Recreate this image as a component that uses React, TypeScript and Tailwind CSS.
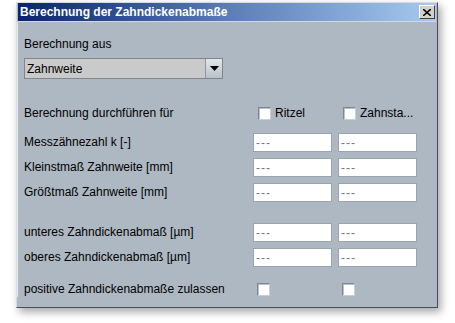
import React from 'react';

const font = { fontFamily: '"Liberation Sans", Arial, sans-serif' };

const Field = () => (
  <div className="w-[79px] h-[19px] bg-white border border-[#9ba4ad] flex items-center pl-[2px] text-[12px] text-[#767676] leading-none tracking-[1px]">
    ---
  </div>
);

const Check = () => (
  <div className="w-[13px] h-[13px] bg-white border border-t-[#7f8891] border-l-[#7f8891] border-r-[#c9ced3] border-b-[#c9ced3] shadow-[inset_1px_1px_0_#b9c0c7]" />
);

const FieldRow = ({ label, className = '' }: { label: string; className?: string }) => (
  <div className={`flex items-center h-[19px] ${className}`}>
    <span className="w-[229px] text-[12px] leading-[15px] text-black">{label}</span>
    <div className="flex gap-[6px]">
      <Field />
      <Field />
    </div>
  </div>
);

export default function App() {
  return (
    <div className="w-[455px] h-[323px] bg-white pt-[2px] pl-[16px]" style={font}>
      <div className="w-[422px] h-[306px] flex flex-col bg-[#aeb8c2] border border-t-[#d8dce0] border-l-[#d8dce0] border-r-[#4a4d52] border-b-[#4a4d52] shadow-[3px_4px_8px_rgba(0,0,0,0.35)]">
        <div className="h-[19px] mx-[1px] flex items-center justify-between bg-gradient-to-r from-[#0a246a] via-[#5a7db5] to-[#a6caf0] border-b border-[#d4d8dc]">
          <span className="pl-[2px] text-white font-bold text-[12px] leading-none">
            Berechnung der Zahndickenabmaße
          </span>
          <div className="w-[16px] h-[14px] mr-[1px] bg-[#d4d0c8] border border-t-white border-l-white border-r-[#404040] border-b-[#404040] flex items-center justify-center">
            <svg width="8" height="7" viewBox="0 0 8 7">
              <path d="M0 0L8 7M8 0L0 7" stroke="#000" strokeWidth="1.6" />
            </svg>
          </div>
        </div>

        <div className="flex flex-col pl-[6px] border-l border-[#e6e9ec]">
          <span className="mt-[15px] text-[12px] leading-[15px] text-black">Berechnung aus</span>

          <div className="mt-[6px] w-[199px] h-[21px] flex border border-[#7d8791] bg-[#cacaca]">
            <span className="flex-1 flex items-center pl-[2px] text-[12px] leading-none text-black">Zahnweite</span>
            <div className="w-[17px] h-full border-l border-[#8d97a1] bg-gradient-to-b from-[#e4e7ea] to-[#b9c1c9] flex items-center justify-center">
              <svg width="9" height="5" viewBox="0 0 9 5">
                <path d="M0 0H9L4.5 5Z" fill="#000" />
              </svg>
            </div>
          </div>

          <div className="mt-[26px] flex items-center h-[16px]">
            <span className="w-[229px] text-[12px] leading-[15px] text-black">Berechnung durchführen für</span>
            <div className="w-[85px] flex items-center pl-[5px] gap-[4px]">
              <Check />
              <span className="text-[12px] leading-none text-black">Ritzel</span>
            </div>
            <div className="flex items-center pl-[5px] gap-[4px]">
              <Check />
              <span className="text-[12px] leading-none text-black">Zahnsta...</span>
            </div>
          </div>

          <FieldRow label="Messzähnezahl k [-]" className="mt-[12px]" />
          <FieldRow label="Kleinstmaß Zahnweite [mm]" className="mt-[6px]" />
          <FieldRow label="Größtmaß Zahnweite [mm]" className="mt-[6px]" />

          <FieldRow label="unteres Zahndickenabmaß [µm]" className="mt-[21px]" />
          <FieldRow label="oberes Zahndickenabmaß [µm]" className="mt-[6px]" />

          <div className="mt-[14px] flex items-center h-[16px]">
            <span className="w-[229px] text-[12px] leading-[15px] text-black">positive Zahndickenabmaße zulassen</span>
            <div className="w-[85px] pl-[4px]">
              <Check />
            </div>
            <div className="pl-[4px]">
              <Check />
            </div>
          </div>
        </div>
      </div>
    </div>
  );
}
